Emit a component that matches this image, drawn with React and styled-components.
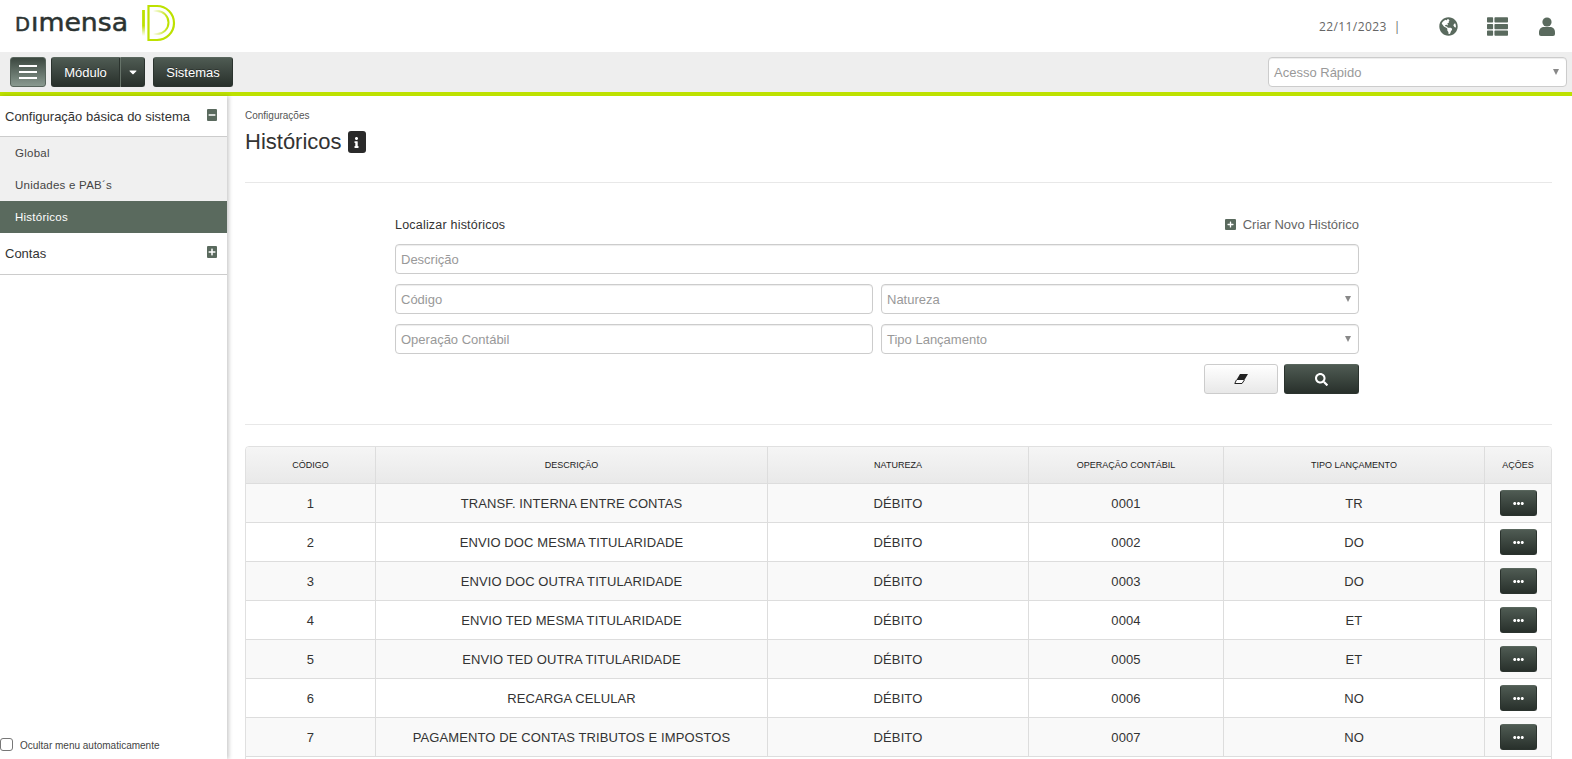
import styled, { createGlobalStyle } from "styled-components";
import {
  FaCaretDown,
  FaEllipsisH,
  FaGlobeAmericas,
  FaInfo,
  FaMinus,
  FaPlus,
  FaSearch,
  FaThList,
} from "react-icons/fa";

const GlobalStyle = createGlobalStyle`
  html, body {
    margin: 0;
    padding: 0;
    height: 100%;
    overflow: hidden;
    background: #fff;
    font-family: "Liberation Sans", Arial, sans-serif;
    color: #333;
  }
  * { box-sizing: border-box; }
`;

const Page = styled.div`
  height: 759px;
  overflow: hidden;
  display: flex;
  flex-direction: column;
`;

const TopBar = styled.header`
  height: 52px;
  flex: none;
  display: flex;
  align-items: center;
  justify-content: space-between;
  padding: 0 1px 0 14px;
`;

const UserArea = styled.div`
  display: flex;
  align-items: center;
  color: #5a6a5e;
`;

const DateText = styled.span`
  font-family: "Open Sans", sans-serif;
  font-size: 12px;
  letter-spacing: 0.4px;
  color: #666;
  width: 105px;
`;

const TopIcon = styled.span`
  width: 49px;
  display: flex;
  justify-content: center;
  font-size: ${(p) => p.$size || 20}px;
`;

const NavBar = styled.nav`
  height: 44px;
  flex: none;
  background: #eeeeee;
  border-bottom: 4px solid #bde100;
  display: flex;
  align-items: flex-start;
  padding: 5px 5px 0 10px;
  gap: 5px;
`;

const DarkButton = styled.button`
  height: 30px;
  border: 1px solid #2b332e;
  border-top-color: #59665d;
  border-radius: 3px;
  background: linear-gradient(#4f5b53, #28302b);
  color: #fff;
  font-family: inherit;
  font-size: 13px;
  text-shadow: 0 -1px 0 rgba(0, 0, 0, 0.35);
  padding: 0;
  display: inline-flex;
  align-items: center;
  justify-content: center;
`;

const MenuButton = styled(DarkButton)`
  width: 36px;
  flex-direction: column;
  gap: 4px;
  background: linear-gradient(#3b473f, #8a9a90);
  border-color: #58655c;
`;

const MenuLine = styled.span`
  width: 18px;
  height: 2px;
  background: #fff;
`;

const SplitGroup = styled.div`
  display: flex;
  width: 94px;
`;

const ModuleButton = styled(DarkButton)`
  width: 69px;
  border-radius: 3px 0 0 3px;
`;

const CaretButton = styled(DarkButton)`
  width: 25px;
  border-radius: 0 3px 3px 0;
  border-left-color: #667369;
  font-size: 12px;
`;

const SystemButton = styled(DarkButton)`
  width: 80px;
  margin-left: 3px;
`;

const SelectBox = styled.div`
  height: 30px;
  background: #fff;
  border: 1px solid #ccc;
  border-radius: 4px;
  box-shadow: inset 0 1px 1px rgba(0, 0, 0, 0.075);
  display: flex;
  align-items: center;
  justify-content: space-between;
  padding: 0 7px 0 5px;
  font-size: 13px;
  color: #999;
  grid-column: ${(p) => p.$span || "auto"};
`;

const QuickAccess = styled(SelectBox)`
  width: 299px;
  margin-left: auto;
`;

const Arrow = styled.span`
  width: 0;
  height: 0;
  border-left: 3.5px solid transparent;
  border-right: 3.5px solid transparent;
  border-top: 6px solid #888;
`;

const Body = styled.div`
  flex: 1;
  min-height: 0;
  display: flex;
`;

const Sidebar = styled.aside`
  width: 227px;
  flex: none;
  display: flex;
  flex-direction: column;
  box-shadow: 2px 0 4px rgba(0, 0, 0, 0.2);
  position: relative;
`;

const GroupRow = styled.div`
  height: ${(p) => p.$height}px;
  flex: none;
  display: flex;
  align-items: center;
  justify-content: space-between;
  padding: 0 10px 0 5px;
  font-size: 13px;
  color: #333;
  border-bottom: 1px solid #ccc;
`;

const ToggleBox = styled.span`
  width: 10px;
  height: 12px;
  border-radius: 1px;
  background: #5a6a5e;
  color: #fff;
  font-size: 8px;
  display: flex;
  align-items: center;
  justify-content: center;
  margin-top: -3px;
`;

const SubList = styled.div`
  background: #f0f0f0;
  display: flex;
  flex-direction: column;
`;

const SubItem = styled.div`
  height: 32px;
  display: flex;
  align-items: center;
  padding-left: 15px;
  font-size: 11.5px;
  letter-spacing: 0.25px;
  color: ${(p) => (p.$active ? "#fff" : "#444")};
  background: ${(p) => (p.$active ? "#5a6a5e" : "transparent")};
`;

const AutoHide = styled.label`
  margin-top: auto;
  height: 21px;
  display: flex;
  align-items: flex-start;
  font-size: 10px;
  color: #444;
  gap: 7px;
  line-height: 16px;
`;

const CheckBox = styled.span`
  width: 13px;
  height: 13px;
  flex: none;
  border: 1px solid #777;
  border-radius: 3px;
  background: #fff;
`;

const Content = styled.main`
  flex: 1;
  min-width: 0;
  padding: 14px 20px 0 18px;
`;

const Crumb = styled.div`
  font-size: 10px;
  line-height: 12px;
  color: #555;
`;

const TitleRow = styled.div`
  display: flex;
  align-items: center;
  gap: 6px;
  margin-top: 5px;
  height: 30px;
`;

const Title = styled.h1`
  margin: 0;
  font-size: 22px;
  font-weight: 400;
  color: #333;
`;

const InfoBadge = styled.span`
  width: 18px;
  height: 22px;
  border-radius: 3px;
  background: #2a2a2a;
  color: #fff;
  font-size: 11px;
  display: flex;
  align-items: center;
  justify-content: center;
`;

const Divider = styled.hr`
  border: 0;
  border-top: 1px solid #e8e8e8;
  margin: ${(p) => p.$margin};
`;

const SearchForm = styled.section`
  width: 964px;
  margin-left: 150px;
  display: grid;
  grid-template-columns: 1fr 1fr;
  grid-template-rows: 20px repeat(4, 30px);
  column-gap: 8px;
  row-gap: 10px;
`;

const FormHead = styled.div`
  grid-column: 1 / -1;
  display: flex;
  justify-content: space-between;
  align-items: center;
`;

const FormLabel = styled.span`
  font-size: 12.5px;
  letter-spacing: 0.2px;
  color: #333;
  padding-top: 2px;
`;

const CreateLink = styled.span`
  display: flex;
  align-items: center;
  gap: 7px;
  color: #666;
  font-size: 13px;
`;

const CreateIcon = styled.span`
  width: 11px;
  height: 11px;
  background: #5a6a5e;
  border-radius: 1px;
  color: #fff;
  font-size: 7px;
  display: flex;
  align-items: center;
  justify-content: center;
`;

const FormActions = styled.div`
  grid-column: 1 / -1;
  display: flex;
  justify-content: flex-end;
  gap: 6px;
`;

const ClearButton = styled.button`
  width: 74px;
  border: 1px solid #ccc;
  border-radius: 3px;
  background: linear-gradient(#fff, #e8e8e8);
  padding: 0;
  display: flex;
  align-items: center;
  justify-content: center;
`;

const SearchButton = styled(DarkButton)`
  width: 75px;
  font-size: 13px;
`;

const GridCard = styled.div`
  border: 1px solid #e0e0e0;
  border-radius: 4px 4px 0 0;
  overflow: hidden;
  display: flex;
  flex-direction: column;
`;

const GridRow = styled.div`
  display: grid;
  grid-template-columns: 130px 392px 261px 195px 261px 1fr;
  height: ${(p) => (p.$head ? 37 : 39)}px;
  flex: none;
  background: ${(p) => (p.$head ? "linear-gradient(#f5f5f5, #e9e9e9)" : p.$odd ? "#f9f9f9" : "#fff")};
  border-bottom: 1px solid #dddddd;
`;

const Cell = styled.div`
  display: flex;
  align-items: center;
  justify-content: center;
  border-right: 1px solid #dddddd;
  font-size: ${(p) => (p.$head ? "9px" : "13px")};
  letter-spacing: ${(p) => (p.$head ? "0" : "0.1px")};
  color: ${(p) => (p.$head ? "#222" : "#333")};

  &:last-child {
    border-right: 0;
  }
`;

const DotsButton = styled(DarkButton)`
  width: 37px;
  height: 26px;
  font-size: 11px;
`;

const columns = ["CÓDIGO", "DESCRIÇÃO", "NATUREZA", "OPERAÇÃO CONTÁBIL", "TIPO LANÇAMENTO", "AÇÕES"];

const rows = [
  ["1", "TRANSF. INTERNA ENTRE CONTAS", "DÉBITO", "0001", "TR"],
  ["2", "ENVIO DOC MESMA TITULARIDADE", "DÉBITO", "0002", "DO"],
  ["3", "ENVIO DOC OUTRA TITULARIDADE", "DÉBITO", "0003", "DO"],
  ["4", "ENVIO TED MESMA TITULARIDADE", "DÉBITO", "0004", "ET"],
  ["5", "ENVIO TED OUTRA TITULARIDADE", "DÉBITO", "0005", "ET"],
  ["6", "RECARGA CELULAR", "DÉBITO", "0006", "NO"],
  ["7", "PAGAMENTO DE CONTAS TRIBUTOS E IMPOSTOS", "DÉBITO", "0007", "NO"],
];

// viewBox starts at the svg's place on the page, so the coordinates are page pixels
const Logo = () => (
  <svg width="165" height="44" viewBox="14 4 165 44">
    <defs>
      <linearGradient id="stem" gradientUnits="userSpaceOnUse" x1="0" y1="10" x2="0" y2="36">
        <stop offset="0" stopColor="#bde100" />
        <stop offset="0.6" stopColor="#bde100" />
        <stop offset="1" stopColor="#bde100" stopOpacity="0" />
      </linearGradient>
      <linearGradient id="inner" gradientUnits="userSpaceOnUse" x1="153" y1="0" x2="168" y2="0">
        <stop offset="0" stopColor="#bde100" stopOpacity="0" />
        <stop offset="1" stopColor="#bde100" />
      </linearGradient>
    </defs>
    <text x="15" y="31" fontFamily="DejaVu Sans, sans-serif" fontSize="19.5" fill="#2b3331" stroke="#2b3331" strokeWidth="0.5" textLength="15" lengthAdjust="spacingAndGlyphs">
      D
    </text>
    <text x="31" y="31" fontFamily="DejaVu Sans, sans-serif" fontSize="25.6" fill="#2b3331" stroke="#2b3331" strokeWidth="0.5" textLength="97" lengthAdjust="spacingAndGlyphs">
      ımensa
    </text>
    <path d="M143.5 10v26" stroke="url(#stem)" strokeWidth="2.8" fill="none" />
    <path d="M148.5 6h8.5a17 17 0 0 1 0 34h-8.5z" stroke="#bde100" strokeWidth="2.2" fill="none" />
    <path d="M153 11h4a11.5 11.5 0 0 1 0 23h-4" stroke="url(#inner)" strokeWidth="2" fill="none" />
  </svg>
);

const UserIcon = () => (
  <svg width="16" height="19" viewBox="0 0 16 19" fill="currentColor">
    <circle cx="8" cy="5" r="4.6" />
    <path d="M0 15.5C0 11.5 2.5 10 5 10h6c2.5 0 5 1.5 5 5.5V17a2 2 0 0 1-2 2H2a2 2 0 0 1-2-2z" />
  </svg>
);

const EraserIcon = () => (
  <svg width="14" height="10" viewBox="0 0 14 10">
    <path d="M6 0H14L10.4 6H2.4z" fill="#222" />
    <path d="M2.4 6L.8 9.5H8L10.4 6" fill="#fff" stroke="#222" strokeWidth="1" />
  </svg>
);

const App = () => (
  <Page>
    <GlobalStyle />
    <TopBar>
      <Logo />
      <UserArea>
        <DateText>22/11/2023 &nbsp;|</DateText>
        <TopIcon $size={19}>
          <FaGlobeAmericas />
        </TopIcon>
        <TopIcon $size={21}>
          <FaThList />
        </TopIcon>
        <TopIcon>
          <UserIcon />
        </TopIcon>
      </UserArea>
    </TopBar>

    <NavBar>
      <MenuButton aria-label="Menu">
        <MenuLine />
        <MenuLine />
        <MenuLine />
      </MenuButton>
      <SplitGroup>
        <ModuleButton>Módulo</ModuleButton>
        <CaretButton aria-label="Abrir módulos">
          <FaCaretDown />
        </CaretButton>
      </SplitGroup>
      <SystemButton>Sistemas</SystemButton>
      <QuickAccess>
        Acesso Rápido
        <Arrow />
      </QuickAccess>
    </NavBar>

    <Body>
      <Sidebar>
        <GroupRow $height={41}>
          Configuração básica do sistema
          <ToggleBox>
            <FaMinus />
          </ToggleBox>
        </GroupRow>
        <SubList>
          <SubItem>Global</SubItem>
          <SubItem>Unidades e PAB´s</SubItem>
          <SubItem $active>Históricos</SubItem>
        </SubList>
        <GroupRow $height={42}>
          Contas
          <ToggleBox>
            <FaPlus />
          </ToggleBox>
        </GroupRow>
        <AutoHide>
          <CheckBox />
          Ocultar menu automaticamente
        </AutoHide>
      </Sidebar>

      <Content>
        <Crumb>Configurações</Crumb>
        <TitleRow>
          <Title>Históricos</Title>
          <InfoBadge>
            <FaInfo />
          </InfoBadge>
        </TitleRow>
        <Divider $margin="25px 0 31px" />

        <SearchForm>
          <FormHead>
            <FormLabel>Localizar históricos</FormLabel>
            <CreateLink>
              <CreateIcon>
                <FaPlus />
              </CreateIcon>
              Criar Novo Histórico
            </CreateLink>
          </FormHead>
          <SelectBox $span="1 / -1">Descrição</SelectBox>
          <SelectBox>Código</SelectBox>
          <SelectBox>
            Natureza
            <Arrow />
          </SelectBox>
          <SelectBox>Operação Contábil</SelectBox>
          <SelectBox>
            Tipo Lançamento
            <Arrow />
          </SelectBox>
          <FormActions>
            <ClearButton aria-label="Limpar">
              <EraserIcon />
            </ClearButton>
            <SearchButton aria-label="Buscar">
              <FaSearch />
            </SearchButton>
          </FormActions>
        </SearchForm>
        <Divider $margin="30px 0 21px" />

        <GridCard>
          <GridRow $head>
            {columns.map((c) => (
              <Cell $head key={c}>
                {c}
              </Cell>
            ))}
          </GridRow>
          {rows.map((r, i) => (
            <GridRow key={r[0]} $odd={i % 2 === 0}>
              {r.map((v, j) => (
                <Cell key={j}>{v}</Cell>
              ))}
              <Cell>
                <DotsButton aria-label="Ações">
                  <FaEllipsisH />
                </DotsButton>
              </Cell>
            </GridRow>
          ))}
          <GridRow />
        </GridCard>
      </Content>
    </Body>
  </Page>
);

export default App;
